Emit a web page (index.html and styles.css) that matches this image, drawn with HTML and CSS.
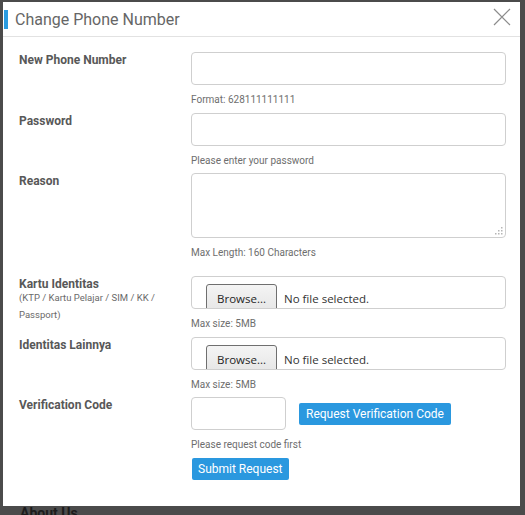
FILE: index.html
```html
<!DOCTYPE html>
<html lang="en">
<head>
<meta charset="utf-8">
<title>Change Phone Number</title>
<link rel="stylesheet" href="styles.css">
</head>
<body>
<div class="page">
  <div class="page-footer">About Us</div>
</div>
<div class="modal">
  <div class="modal-header">
    <span class="title-bar"></span>
    <h1 class="modal-title">Change Phone Number</h1>
    <button class="close" type="button" aria-label="Close">
      <svg width="18" height="18" viewBox="0 0 18 18"><path d="M1 1L17 17M17 1L1 17" stroke="#8c8c8c" stroke-width="1.2" fill="none"/></svg>
    </button>
  </div>
  <form class="modal-body">
    <div class="row">
      <label class="label">New Phone Number</label>
      <div class="field">
        <input class="input" type="text">
        <div class="help">Format: 628111111111</div>
      </div>
    </div>
    <div class="row">
      <label class="label">Password</label>
      <div class="field">
        <input class="input" type="password">
        <div class="help help-tight">Please enter your password</div>
      </div>
    </div>
    <div class="row">
      <label class="label">Reason</label>
      <div class="field">
        <div class="textarea-wrap">
          <textarea class="textarea"></textarea>
          <svg class="grip" width="9" height="9" viewBox="0 0 9 9"><g fill="#b5b5b5"><rect x="7" y="1" width="1.5" height="1.5"/><rect x="4" y="4" width="1.5" height="1.5"/><rect x="7" y="4" width="1.5" height="1.5"/><rect x="1" y="7" width="1.5" height="1.5"/><rect x="4" y="7" width="1.5" height="1.5"/><rect x="7" y="7" width="1.5" height="1.5"/></g></svg>
        </div>
        <div class="help help-wide">Max Length: 160 Characters</div>
      </div>
    </div>
    <div class="row">
      <label class="label">Kartu Identitas<span class="label-sub">(KTP / Kartu Pelajar / SIM / KK /<br>Passport)</span></label>
      <div class="field">
        <div class="file"><span class="file-btn">Browse...</span><span class="file-name">No file selected.</span></div>
        <div class="help">Max size: 5MB</div>
      </div>
    </div>
    <div class="row">
      <label class="label">Identitas Lainnya</label>
      <div class="field">
        <div class="file"><span class="file-btn">Browse...</span><span class="file-name">No file selected.</span></div>
        <div class="help help-tight">Max size: 5MB</div>
      </div>
    </div>
    <div class="row">
      <label class="label">Verification Code</label>
      <div class="field">
        <div class="code-line">
          <input class="input input-code" type="text">
          <button class="btn" type="button">Request Verification Code</button>
        </div>
        <div class="help">Please request code first</div>
        <button class="btn btn-submit" type="submit">Submit Request</button>
      </div>
    </div>
  </form>
</div>
</body>
</html>
```

FILE: styles.css
```css
html, body {
  margin: 0;
  padding: 0;
}
body {
  width: 525px;
  height: 515px;
  overflow: hidden;
  background: #4b4b4b;
  font-family: Roboto, "Liberation Sans", sans-serif;
  position: relative;
}
.page {
  padding: 505px 0 0 20px;
}
.page-footer {
  font-size: 14px;
  line-height: 16px;
  font-weight: 700;
  color: #1c1c1c;
}
.modal {
  position: absolute;
  top: 2px;
  left: 3px;
  width: 517px;
  height: 504px;
  background: #fff;
}
.modal-header {
  height: 34px;
  border-bottom: 1px solid #e2e2e2;
  display: flex;
  align-items: center;
}
.title-bar {
  width: 4px;
  height: 19px;
  margin-left: 1px;
  margin-top: 1px;
  background: #2a9be0;
}
.modal-title {
  margin: 2px 0 0 7px;
  font-size: 16px;
  font-weight: 400;
  color: #666;
  line-height: 20px;
}
.close {
  margin: 6px 9px 0 auto;
  align-self: flex-start;
  padding: 0;
  border: 0;
  background: none;
  width: 18px;
  height: 18px;
  display: block;
}
.close svg {
  display: block;
}
.modal-body {
  margin: 0;
  padding: 15px 14px 0 16px;
}
.row {
  display: grid;
  grid-template-columns: 172px 315px;
}
.label {
  padding-top: 1px;
  font-size: 12px;
  line-height: 15px;
  font-weight: 700;
  color: #585858;
}
.label-sub {
  display: block;
  margin-top: -3px;
  font-size: 9.5px;
  line-height: 17px;
  font-weight: 400;
  color: #6a6a6a;
}
.field {
  display: flex;
  flex-direction: column;
  align-items: flex-start;
}
.input {
  box-sizing: border-box;
  width: 315px;
  height: 33px;
  margin: 0;
  border: 1px solid #cfcfcf;
  border-radius: 4px;
  background: #fff;
  outline: none;
}
.textarea-wrap {
  position: relative;
  width: 315px;
  height: 65px;
}
.textarea {
  box-sizing: border-box;
  display: block;
  width: 315px;
  height: 65px;
  margin: 0;
  border: 1px solid #cfcfcf;
  border-radius: 4px;
  resize: none;
  outline: none;
}
.grip {
  position: absolute;
  right: 3px;
  bottom: 3px;
}
.help {
  padding-top: 9px;
  margin-bottom: 7px;
  font-size: 10px;
  line-height: 12px;
  color: #6e6e6e;
}
.help-tight {
  margin-bottom: 6px;
}
.help-wide {
  margin-bottom: 17px;
}
.file {
  box-sizing: border-box;
  width: 315px;
  height: 33px;
  border: 1px solid #cfcfcf;
  border-radius: 4px;
  overflow: hidden;
  display: flex;
  align-items: flex-start;
  padding: 7px 0 0 14px;
  font-family: "Open Sans", "Liberation Sans", sans-serif;
}
.file-btn {
  flex: none;
  box-sizing: border-box;
  width: 71px;
  height: 31px;
  padding-top: 4px;
  line-height: 19px;
  border: 1px solid #6f6f6f;
  border-radius: 3px;
  background: linear-gradient(#f4f4f4, #e4e4e4);
  text-align: center;
  font-size: 11.5px;
  color: #1f1f1f;
}
.file-name {
  margin-left: 7px;
  padding-top: 5px;
  line-height: 19px;
  font-size: 11.5px;
  color: #333;
}
.code-line {
  display: flex;
  align-items: center;
  gap: 13px;
}
.input-code {
  width: 95px;
}
.btn {
  height: 22px;
  margin: 0;
  padding: 0 7px;
  border: 0;
  border-radius: 2px;
  background: #2a98df;
  color: #fff;
  font-family: Roboto, "Liberation Sans", sans-serif;
  font-size: 12px;
  line-height: 22px;
}
.btn-submit {
  margin-left: 1px;
  padding: 0 6px;
}
```
